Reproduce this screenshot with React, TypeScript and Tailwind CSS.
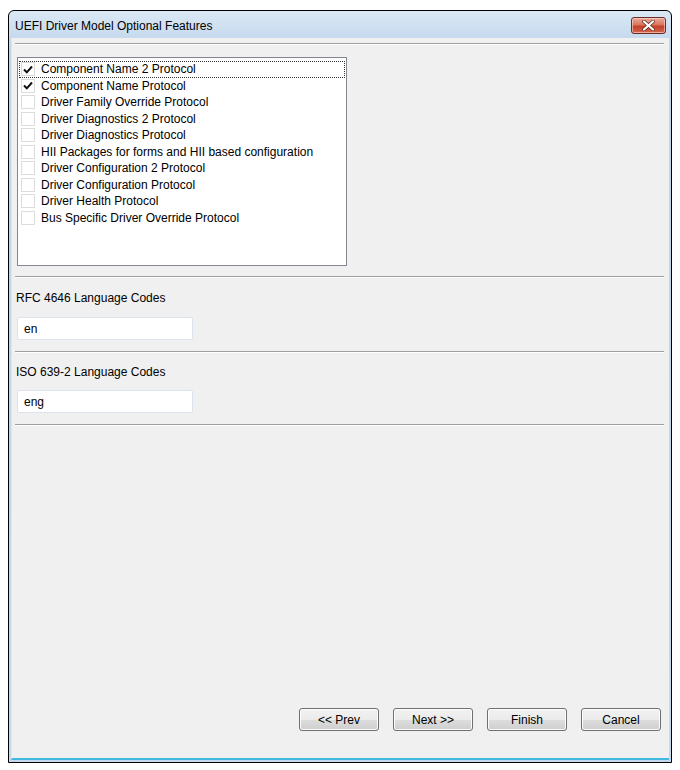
import React from "react";

const items = [
  { label: "Component Name 2 Protocol", checked: true, focus: true },
  { label: "Component Name Protocol", checked: true },
  { label: "Driver Family Override Protocol" },
  { label: "Driver Diagnostics 2 Protocol" },
  { label: "Driver Diagnostics Protocol" },
  { label: "HII Packages for forms and HII based configuration" },
  { label: "Driver Configuration 2 Protocol" },
  { label: "Driver Configuration Protocol" },
  { label: "Driver Health Protocol" },
  { label: "Bus Specific Driver Override Protocol" },
];

function Sep({ className = "" }: { className?: string }) {
  return <div className={"h-[2px] border-t border-[#a0a0a0] border-b border-b-white mr-[5px] " + className} />;
}

function Btn({ children }: { children: React.ReactNode }) {
  return (
    <button className="w-[80px] h-[23px] rounded-[3px] border border-[#707070] bg-[linear-gradient(to_bottom,#f2f2f2_0%,#ebebeb_50%,#dddddd_51%,#cfcfcf_100%)] text-[12px] text-black leading-none shadow-[inset_0_0_0_1px_#fcfcfc]">
      {children}
    </button>
  );
}

export default function App() {
  return (
    <div className="w-[680px] h-[770px] bg-white pt-[10px] pl-[8px]" style={{ fontFamily: '"Liberation Sans", Arial, sans-serif' }}>
      <div className="w-[664px] h-[753px] border border-black rounded-t-[6px] bg-[linear-gradient(to_bottom,#dbe8f5,#bcd3ea_40px,#c4d9ee)] flex flex-col overflow-hidden">
        {/* title bar */}
        <div className="h-[27px] flex items-center pl-[6px] pr-[5px] shrink-0">
          <span className="text-[12px] text-black mt-[2px]">UEFI Driver Model Optional Features</span>
          <div className="ml-auto mt-[1px] w-[35px] h-[17px] rounded-[3px] border border-[#6b2b24] bg-[linear-gradient(to_bottom,#e9a99a_0%,#d9765f_45%,#c5412a_55%,#d2664d_100%)] flex items-center justify-center shadow-[inset_0_0_0_1px_rgba(255,220,210,0.6)]">
            <svg width="13" height="11" viewBox="0 0 13 11">
              <path d="M2 1.5 L11 9.5 M11 1.5 L2 9.5" stroke="#5a2a22" strokeWidth="3.6" strokeLinecap="round" />
              <path d="M2 1.5 L11 9.5 M11 1.5 L2 9.5" stroke="#ffffff" strokeWidth="2.2" strokeLinecap="round" />
            </svg>
          </div>
        </div>
        {/* content */}
        <div className="flex-1 ml-[2px] mr-[2px] mb-[2px] bg-[#f0f0f0] border-l border-[#dfe8f2] flex flex-col pl-[3px] border-b-[2px] border-b-[#40b8e0]">
          <Sep className="mt-[5px]" />
          <div className="ml-[2px] mt-[12px] w-[330px] h-[209px] bg-white border border-[#828790] pt-[3px] pl-[1px] pr-[1px]">
            {items.map((it, i) => (
              <div
                key={i}
                className={
                  "h-[16.5px] flex items-center pl-[2px] " +
                  (it.focus ? "outline outline-1 outline-dotted outline-[#333] -outline-offset-1" : "")
                }
              >
                <div className="w-[14px] h-[14px] border border-[#dcdcdc] bg-white flex items-center justify-center shrink-0">
                  {it.checked && (
                    <svg width="10" height="9" viewBox="0 0 10 9">
                      <path d="M1 4.5 L3.8 7.3 L9 1.5" fill="none" stroke="#111" strokeWidth="2" />
                    </svg>
                  )}
                </div>
                <span className="ml-[6px] text-[12px] text-[#000] whitespace-nowrap leading-none">{it.label}</span>
              </div>
            ))}
          </div>
          <Sep className="mt-[10px]" />
          <div className="mt-[13px] ml-[1px] text-[12px] leading-[15px] text-black">RFC 4646 Language Codes</div>
          <div className="mt-[11px] ml-[2px] w-[176px] h-[23px] bg-white border border-[#dde3ea] rounded-[2px] flex items-center pl-[6px] text-[12px] text-black">en</div>
          <Sep className="mt-[11px]" />
          <div className="mt-[12px] ml-[1px] text-[12px] leading-[15px] text-black">ISO 639-2 Language Codes</div>
          <div className="mt-[10px] ml-[2px] w-[176px] h-[23px] bg-white border border-[#dde3ea] rounded-[2px] flex items-center pl-[6px] text-[12px] text-black">eng</div>
          <Sep className="mt-[11px]" />
          <div className="flex-1" />
          <div className="flex justify-end gap-[14px] pr-[8px] mb-[27px]">
            <Btn>&lt;&lt; Prev</Btn>
            <Btn>Next &gt;&gt;</Btn>
            <Btn>Finish</Btn>
            <Btn>Cancel</Btn>
          </div>
        </div>
      </div>
    </div>
  );
}
